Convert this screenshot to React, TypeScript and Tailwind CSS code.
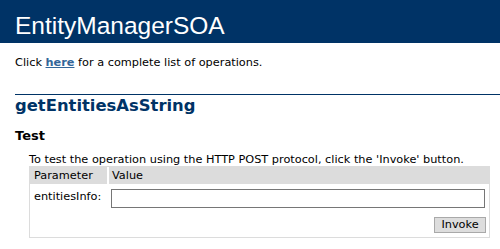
import React from "react";

export default function App() {
  return (
    <div className="w-[500px] h-[249px] overflow-hidden bg-white text-black font-['DejaVu_Sans',sans-serif] text-[11.3px]">
      <div className="h-[43px] bg-[#003366] pl-[15px] pt-[12px]">
        <div className="text-white text-[24.5px] leading-[28px] font-['Liberation_Sans',sans-serif]">
          EntityManagerSOA
        </div>
      </div>

      <p className="pl-[15px] mt-[13px] leading-[14px]">
        Click{" "}
        <a href="#" className="font-bold text-[#336699] underline">
          here
        </a>{" "}
        for a complete list of operations.
      </p>

      <div className="ml-[15px] mt-[24px] border-t border-[#003366]">
        <h2 className="text-[#003366] font-bold text-[16.4px] leading-[20px] mt-[1px]">
          getEntitiesAsString
        </h2>
        <h3 className="font-bold text-[13px] leading-[16px] mt-[12px]">Test</h3>
      </div>

      <div className="ml-[29px] w-[461px] mt-[9px]">
        <p className="leading-[13px]">
          To test the operation using the HTTP POST protocol, click the 'Invoke' button.
        </p>
        <div className="border border-[#dcdcdc] h-[72px]">
          <div className="flex h-[17px] leading-[17px] gap-[2px]">
            <div className="w-[77px] bg-[#dcdcdc] pl-[4px]">Parameter</div>
            <div className="flex-1 bg-[#dcdcdc] pl-[3px]">Value</div>
          </div>
          <div className="flex items-start mt-[5px]">
            <div className="w-[81px] pl-[4px] pt-[1px] leading-[13px]">entitiesInfo:</div>
            <input
              type="text"
              className="w-[374px] h-[19px] border border-[#767676] bg-white outline-none"
            />
          </div>
          <div className="flex justify-end mt-[9px] pr-[3px]">
            <button className="h-[16px] w-[52px] bg-[#dddddd] border border-[#a9a9a9] leading-[14px] text-[11.3px]">
              Invoke
            </button>
          </div>
        </div>
      </div>
    </div>
  );
}
